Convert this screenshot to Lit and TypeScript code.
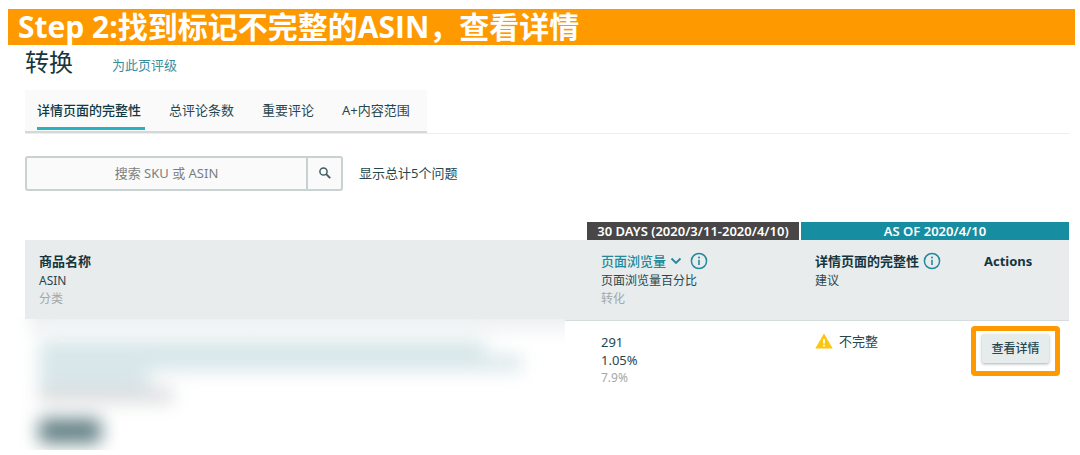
import { LitElement, html, css } from "lit";
import { customElement, state } from "lit/decorators.js";

const TABS = ["详情页面的完整性", "总评论条数", "重要评论", "A+内容范围"];

const infoIcon = html`<svg class="info" viewBox="0 0 18 18" width="18" height="18" aria-hidden="true">
  <circle cx="9" cy="9" r="7.6" fill="none" stroke="currentColor" stroke-width="1.5" />
  <circle cx="9" cy="5.6" r="1" fill="currentColor" />
  <rect x="8.2" y="7.8" width="1.6" height="5.2" fill="currentColor" />
</svg>`;

@customElement("app-root")
export class AppRoot extends LitElement {
  @state() private active = 0;

  static styles = css`
    :host {
      display: block;
      padding: 9px 5px 5px 8px;
      background: #fff;
      color: #27474f;
      font-family: "Noto Sans", "Noto Sans CJK SC", sans-serif;
      font-size: 13px;
      line-height: 18px;
    }
    * {
      box-sizing: border-box;
    }
    button,
    input {
      font: inherit;
      color: inherit;
      margin: 0;
    }
    .banner {
      margin: 0;
      padding: 0 10px;
      background: #ff9900;
      color: #fff;
      font-family: "Open Sans", "Noto Sans CJK SC", sans-serif;
      font-size: 30px;
      font-weight: 700;
      line-height: 36px;
      height: 36px;
      white-space: nowrap;
    }
    .content {
      padding: 0 6px 0 17px;
    }
    .heading {
      display: flex;
      align-items: center;
      gap: 39px;
      height: 45px;
      padding-bottom: 11px;
    }
    .heading h2 {
      margin: 0;
      font-size: 24px;
      font-weight: 400;
      line-height: 32px;
      color: #17363d;
    }
    .heading a {
      padding-top: 6px;
      color: #3a8d9c;
      text-decoration: none;
    }
    .tabs {
      display: flex;
      border-bottom: 1px solid #eceeee;
    }
    .tablist {
      display: flex;
      gap: 24px;
      padding: 0 13px 0 12px;
      background: #fafafa;
      border-bottom: 2px solid #d5d8d8;
    }
    .tab {
      height: 40px;
      padding: 3px 4px 0 0;
      margin-bottom: 1px;
      border: 0;
      border-bottom: 3px solid transparent;
      background: none;
      white-space: nowrap;
    }
    .tab.active {
      border-bottom-color: #26b3bf;
      color: #0f3a42;
      font-weight: 500;
    }
    .search {
      display: flex;
      align-items: center;
      gap: 16px;
      padding: 22px 0 31px;
    }
    .box {
      display: flex;
      width: 318px;
      height: 35px;
      border: 2px solid #c9d2d3;
      border-radius: 3px;
      background: #fafafa;
    }
    .box input {
      flex: 1;
      min-width: 0;
      border: 0;
      padding: 0 0 2px;
      background: none;
      text-align: center;
    }
    .box input::placeholder {
      color: #7b7f80;
      opacity: 1;
    }
    .box button {
      display: grid;
      place-items: center;
      width: 35px;
      padding: 0 0 2px;
      border: 0;
      border-left: 2px solid #c9d2d3;
      background: none;
    }
    .count {
      padding-bottom: 2px;
    }
    table {
      width: 100%;
      table-layout: fixed;
      border-collapse: separate;
      border-spacing: 0;
    }
    .col-views {
      width: 214px;
    }
    .col-complete {
      width: 169px;
    }
    .col-actions {
      width: 99px;
    }
    th,
    td {
      padding: 0;
      text-align: left;
      vertical-align: top;
      font-weight: 400;
    }
    .band th {
      height: 18px;
      color: #fff;
      font-weight: 600;
      line-height: 18px;
      text-align: center;
      white-space: nowrap;
    }
    .band .dark {
      background: #484646;
      border-right: 2px solid #fff;
    }
    .band .teal {
      background: #168da0;
    }
    .head th {
      height: 81px;
      padding: 12px 0 0 14px;
      background: #e8eced;
      border-bottom: 1px solid #d5dcdd;
      white-space: nowrap;
    }
    .title {
      display: flex;
      align-items: center;
      gap: 4px;
      height: 18px;
      margin-bottom: 2px;
      color: #14353d;
      font-weight: 700;
    }
    .sort {
      display: flex;
      align-items: center;
      gap: 4px;
      margin-right: 4px;
      padding: 0;
      border: 0;
      background: none;
      color: #23899a;
      font-weight: 500;
    }
    .info {
      color: #23899a;
    }
    .small {
      font-size: 12px;
    }
    .muted {
      color: #a3a8a9;
      font-size: 12px;
    }
    .row td {
      padding: 12px 0 0 14px;
    }
    .row .product {
      padding: 0;
    }
    .hidden-text {
      height: 131px;
      margin: -2px 22px 0 -7px;
      padding: 0 7px;
      overflow: hidden;
      background:
        linear-gradient(90deg, #fff, rgba(255, 255, 255, 0) 22px),
        linear-gradient(#eef1f2, #fff 24px);
    }
    .smudges {
      display: flex;
      flex-direction: column;
      padding: 20px 0 0 14px;
      filter: blur(9px);
    }
    .line {
      height: 16px;
      background: #d9e7ea;
    }
    .line.first {
      width: 86%;
    }
    .line.second {
      width: 93%;
    }
    .line.third {
      width: 110px;
    }
    .line.sku {
      width: 134px;
      background: #dcdddf;
    }
    .pill {
      width: 62px;
      height: 24px;
      margin-top: 16px;
      border-radius: 4px;
      background: #5f7d82;
    }
    .status {
      display: flex;
      align-items: center;
      gap: 6px;
      margin-top: -1px;
    }
    .row .action {
      padding: 5px 0 0 1px;
    }
    .highlight {
      display: flex;
      justify-content: center;
      width: 89px;
      height: 50px;
      padding-top: 3px;
      border: 5px solid #ff9900;
      border-radius: 4px;
    }
    .details {
      width: 67px;
      height: 29px;
      padding: 0;
      border: 0;
      border-radius: 2px;
      background: #e6ecec;
      box-shadow: 0 1px 3px rgba(0, 30, 40, 0.35);
      font-size: 12px;
      font-weight: 500;
    }
  `;

  render() {
    return html`
      <h1 class="banner">Step 2:找到标记不完整的ASIN，查看详情</h1>
      <main class="content">
        <div class="heading">
          <h2>转换</h2>
          <a href="#rate">为此页评级</a>
        </div>
        <div class="tabs">
          <div class="tablist" role="tablist">
            ${TABS.map(
              (label, i) => html`<button
                class="tab ${i === this.active ? "active" : ""}"
                role="tab"
                aria-selected=${i === this.active}
                @click=${() => (this.active = i)}
              >${label}</button>`
            )}
          </div>
        </div>
        <div class="search">
          <div class="box">
            <input type="text" aria-label="搜索 SKU 或 ASIN" placeholder="搜索 SKU 或 ASIN" />
            <button aria-label="搜索">
              <svg viewBox="0 0 12 12" width="12" height="12" fill="none" stroke="#3f5d64">
                <circle cx="4.5" cy="4.5" r="3.6" stroke-width="1.5" />
                <path d="M7.2 7.2 11.2 11.2" stroke-width="1.9" />
              </svg>
            </button>
          </div>
          <span class="count">显示总计5个问题</span>
        </div>
        <table>
          <colgroup>
            <col />
            <col class="col-views" />
            <col class="col-complete" />
            <col class="col-actions" />
          </colgroup>
          <thead>
            <tr class="band">
              <td></td>
              <th class="dark" scope="colgroup">30 DAYS (2020/3/11-2020/4/10)</th>
              <th class="teal" scope="colgroup" colspan="2">AS OF 2020/4/10</th>
            </tr>
            <tr class="head">
              <th scope="col">
                <div class="title">商品名称</div>
                <div class="small">ASIN</div>
                <div class="muted">分类</div>
              </th>
              <th scope="col">
                <div class="title">
                  <button class="sort">
                    页面浏览量
                    <svg viewBox="0 0 12 8" width="12" height="8" fill="none" stroke="currentColor" stroke-width="1.8">
                      <path d="M1.5 1.5 6 6 10.5 1.5" />
                    </svg>
                  </button>
                  ${infoIcon}
                </div>
                <div class="small">页面浏览量百分比</div>
                <div class="muted">转化</div>
              </th>
              <th scope="col">
                <div class="title">详情页面的完整性 ${infoIcon}</div>
                <div class="small">建议</div>
              </th>
              <th scope="col"><div class="title">Actions</div></th>
            </tr>
          </thead>
          <tbody>
            <tr class="row">
              <td class="product">
                <div class="hidden-text">
                  <div class="smudges">
                    <div class="line first"></div>
                    <div class="line second"></div>
                    <div class="line third"></div>
                    <div class="line sku"></div>
                    <div class="pill"></div>
                  </div>
                </div>
              </td>
              <td>
                <div>291</div>
                <div>1.05%</div>
                <div class="muted">7.9%</div>
              </td>
              <td>
                <div class="status">
                  <svg viewBox="0 0 18 16" width="18" height="16" aria-hidden="true">
                    <path d="M9 .5 17.7 15.5H.3Z" fill="#fdc50c" />
                    <path d="M8.1 6h1.8v4.6H8.1zM8.1 11.8h1.8v1.8H8.1z" fill="#fff" />
                  </svg>
                  不完整
                </div>
              </td>
              <td class="action">
                <div class="highlight"><button class="details">查看详情</button></div>
              </td>
            </tr>
          </tbody>
        </table>
      </main>
    `;
  }
}
